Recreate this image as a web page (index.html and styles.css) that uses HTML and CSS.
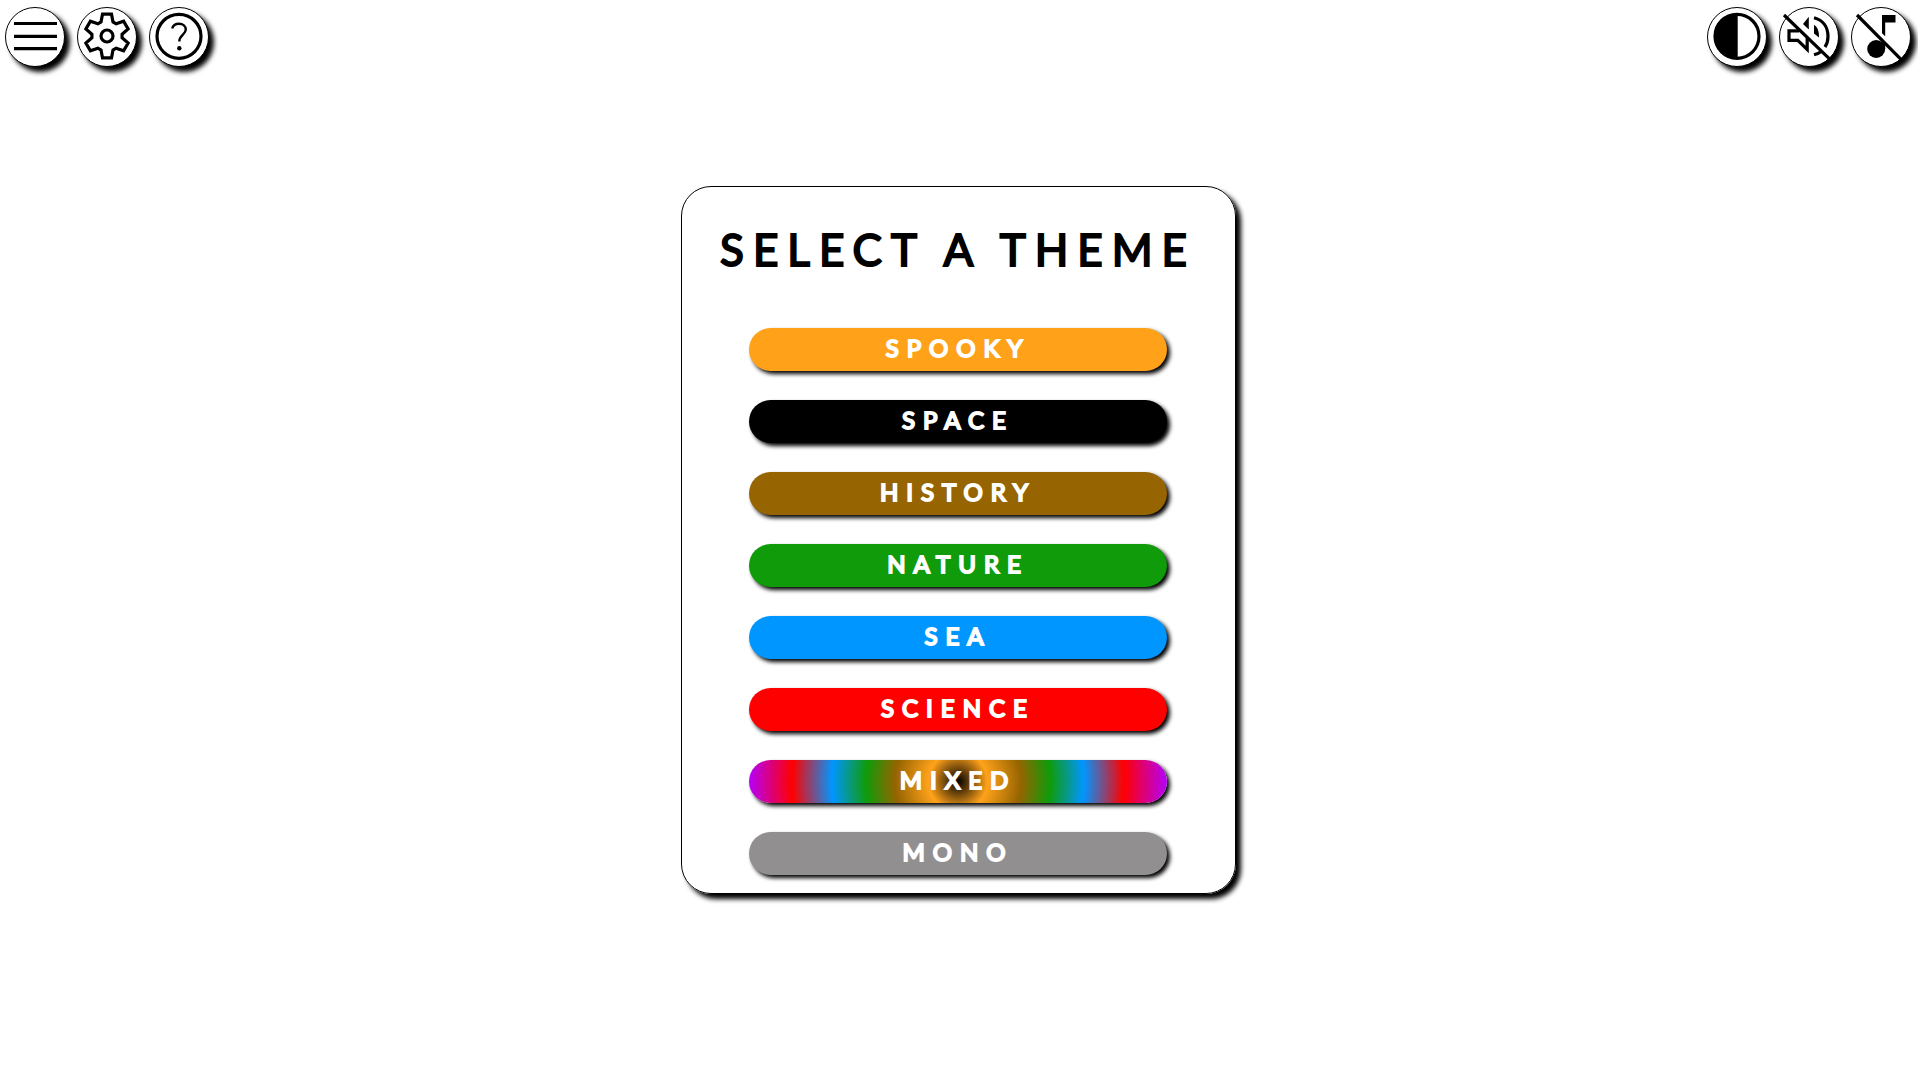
FILE: index.html
```html
<!DOCTYPE html>
<html lang="en">
<head>
<meta charset="utf-8">
<meta name="viewport" content="width=device-width, initial-scale=1">
<title>Select a theme</title>
<link rel="stylesheet" href="styles.css">
</head>
<body>
<header class="toolbar">
  <nav class="tools" aria-label="Game">
    <button class="tool" type="button" aria-label="Menu">
      <svg viewBox="1 1 58 58"><path class="line" d="M9 16.5H52M9 29.3H52M9 41.7H52"/></svg>
    </button>
    <button class="tool" type="button" aria-label="Settings">
      <svg viewBox="1 1 58 58">
        <path class="line" d="M25.5 7.2H34.5L36 15L39.1 16.8L46.6 14.2L51.1 22L45.1 27.2V30.8L51.1 36L46.6 43.8L39.1 41.2L36 43L34.5 50.8H25.5L24 43L20.9 41.2L13.4 43.8L8.9 36L14.9 30.8V27.2L8.9 22L13.4 14.2L20.9 16.8L24 15Z"/>
        <circle class="line" cx="30" cy="29" r="6"/>
      </svg>
    </button>
    <button class="tool" type="button" aria-label="Help">
      <svg viewBox="1 1 58 58">
        <circle class="line" cx="30" cy="29.3" r="22"/>
        <path class="thin" d="M23.2 21.5C24 18 26.8 16.7 30 16.7C34 16.7 36.8 19.2 36.8 22.6C36.8 27.5 30.3 28 30.3 34.5"/>
        <circle cx="30.3" cy="41.2" r="2.2"/>
      </svg>
    </button>
  </nav>
  <div class="tools" role="group" aria-label="Display and sound">
    <button class="tool" type="button" aria-label="Contrast">
      <svg viewBox="1 1 58 58">
        <circle class="line" cx="30" cy="29.3" r="22"/>
        <path d="M30.7 7.3A22 22 0 0 0 30.7 51.3Z"/>
      </svg>
    </button>
    <button class="tool" type="button" aria-label="Sound off">
      <svg viewBox="1 1 58 58">
        <path class="line" d="M20 23.8H10V33.4H18.8L28.2 42.5V31"/>
        <path d="M29.8 9.7V22.5L24 17ZM35 17.8C38.5 20 40.2 24 40 30.5L35 26.5Z"/>
        <path class="line" d="M35 10.7C44 13 49 20 49 29.5C49 33.5 48 37 46 40M35 47.8C38 47 40.5 45.8 42.7 44.2"/>
        <path class="line" d="M5 8L51 52.3"/>
      </svg>
    </button>
    <button class="tool" type="button" aria-label="Music off">
      <svg viewBox="1 1 58 58">
        <path d="M31 8H44.5V15.5H34.2V29.3L31 26.3ZM31 32L34.2 35V42H31Z"/>
        <circle cx="25.2" cy="42" r="9"/>
        <path class="line" d="M6 8L50 52.3"/>
      </svg>
    </button>
  </div>
</header>
<main class="stage">
  <section class="card" aria-labelledby="heading">
    <h1 class="title" id="heading">SELECT A THEME</h1>
    <div class="themes">
      <button class="theme spooky" type="button">SPOOKY</button>
      <button class="theme space" type="button">SPACE</button>
      <button class="theme history" type="button">HISTORY</button>
      <button class="theme nature" type="button">NATURE</button>
      <button class="theme sea" type="button">SEA</button>
      <button class="theme science" type="button">SCIENCE</button>
      <button class="theme mixed" type="button">MIXED</button>
      <button class="theme mono" type="button">MONO</button>
    </div>
  </section>
</main>
</body>
</html>
```
FILE: styles.css
```css
* {
  box-sizing: border-box;
}

body {
  margin: 0;
  min-height: 100vh;
  display: grid;
  grid-template-rows: auto 1fr;
  background: #fff;
  color: #000;
  font-family: Lato, "Open Sans", sans-serif;
}

button {
  font: inherit;
  cursor: pointer;
}

.toolbar {
  display: flex;
  justify-content: space-between;
  padding: 7px 7px 0 5px;
}

.tools {
  display: flex;
  gap: 12px;
}

.tool {
  width: 60px;
  height: 60px;
  padding: 0;
  border: 1px solid #000;
  border-radius: 50%;
  background: #fff;
  box-shadow: 5px 5px 5px #000;
}

.tool svg {
  display: block;
  width: 58px;
  height: 58px;
  overflow: visible;
}

.line,
.thin {
  fill: none;
  stroke: #000;
  stroke-width: 3.2px;
}

.thin {
  stroke-width: 2.4px;
}

.stage {
  display: grid;
  place-items: center;
  padding: 0 16px 64px 14px;
}

.card {
  width: 100%;
  max-width: 555px;
  padding: 30px 24px 18px;
  border: 1px solid #000;
  border-radius: 30px;
  box-shadow: 5px 5px 5px #000;
}

.title {
  margin: 0 0 47px;
  font-size: 44px;
  font-weight: 400;
  line-height: 64px;
  letter-spacing: 9px;
  text-align: center;
  white-space: nowrap;
  -webkit-text-stroke: 2px #000;
  stroke-linejoin: round;
}

.themes {
  display: grid;
  gap: 29px;
  justify-items: center;
}

.theme {
  width: 100%;
  max-width: 418px;
  height: 43px;
  padding: 0 0 3px;
  border: 0;
  border-radius: 22px;
  box-shadow: 3px 3px 4px #000;
  color: #fff;
  font-size: 24px;
  line-height: 32px;
  letter-spacing: 8px;
  -webkit-text-stroke: 2px #fff;
  stroke-linejoin: round;
}

.spooky { background: #ffa21a; }
.space { background: #000; }
.history { background: #966400; }
.nature { background: #0f9b0a; }
.sea { background: #0096ff; }
.science { background: #f00; }
.mono { background: #918f90; }

.mixed {
  background: radial-gradient(circle, #000 0, #ffa21a 14%, #966400 30%, #0f9b0a 44%, #0096ff 60%, #f00 79%, #b400ff 100%);
}
```
